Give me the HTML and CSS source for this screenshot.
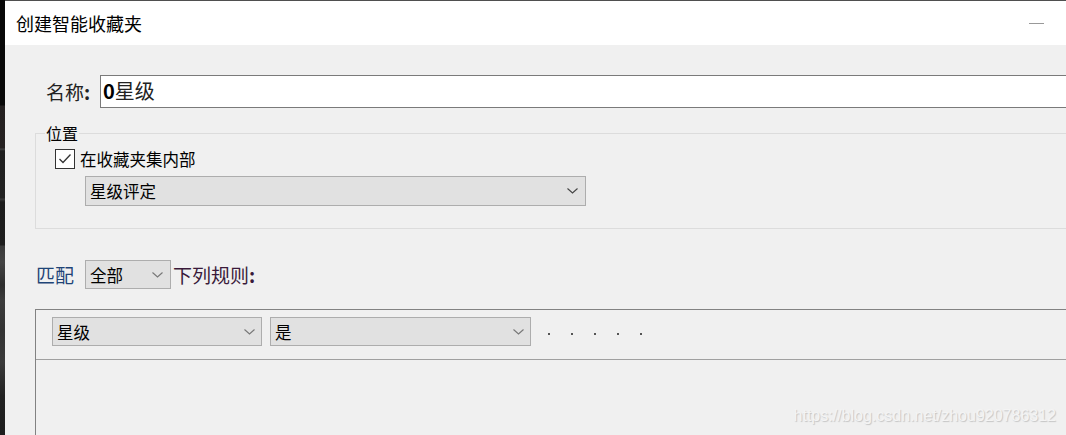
FILE: index.html
```html
<!DOCTYPE html>
<html lang="zh-CN">
<head>
<meta charset="utf-8">
<title>创建智能收藏夹</title>
<link rel="stylesheet" href="styles.css">
</head>
<body>
<div class="strip"></div>
<div class="window">
  <div class="titlebar">
    <span class="title">创建智能收藏夹</span>
    <span class="min"></span>
  </div>
  <div class="content">
    <div class="name-row">
      <span class="name-label">名称<b>:</b></span>
      <div class="name-input"><b>0</b>星级</div>
    </div>
    <div class="group">
      <div class="legend">位置</div>
      <div class="check-row">
        <span class="checkbox"><svg width="18" height="18" viewBox="0 0 18 18"><polyline points="3.5,9 7,12.5 14.5,4.5" fill="none" stroke="#333" stroke-width="1.3"/></svg></span>
        <span class="check-label">在收藏夹集内部</span>
      </div>
      <div class="select select-wide"><span>星级评定</span><svg class="chev" width="11" height="6" viewBox="0 0 11 6"><polyline points="0.5,0.5 5.5,5 10.5,0.5" fill="none" stroke="#444" stroke-width="1.1"/></svg></div>
    </div>
    <div class="match-row">
      <span class="match">匹配</span>
      <div class="select select-all"><span>全部</span><svg class="chev light" width="11" height="6" viewBox="0 0 11 6"><polyline points="0.5,0.5 5.5,5 10.5,0.5" fill="none" stroke="#777" stroke-width="1.1"/></svg></div>
      <span class="rules-label">下列规则<b>:</b></span>
    </div>
    <div class="rules">
      <div class="rule-row">
        <div class="select select-field"><span>星级</span><svg class="chev light" width="11" height="6" viewBox="0 0 11 6"><polyline points="0.5,0.5 5.5,5 10.5,0.5" fill="none" stroke="#777" stroke-width="1.1"/></svg></div>
        <div class="select select-op"><span>是</span><svg class="chev light" width="11" height="6" viewBox="0 0 11 6"><polyline points="0.5,0.5 5.5,5 10.5,0.5" fill="none" stroke="#777" stroke-width="1.1"/></svg></div>
        <div class="dots"><i></i><i></i><i></i><i></i><i></i></div>
      </div>
    </div>
  </div>
  <div class="watermark">https://blog.csdn.net/zhou920786312</div>
</div>
</body>
</html>
```
FILE: styles.css
```css
* { box-sizing: border-box; }
html, body { margin: 0; padding: 0; }
body {
  width: 1066px;
  height: 435px;
  overflow: hidden;
  display: flex;
  background: #1a1a1a;
  font-family: "Noto Sans CJK SC", "Noto Sans", sans-serif;
  color: #000;
}
.strip {
  width: 5px;
  flex: none;
  background: linear-gradient(to bottom,
    #080808 0, #080808 105px,
    #242020 106px, #262222 148px, #444 149px, #1f1f1f 151px,
    #222 198px, #3a3a3a 199px, #1c1c1c 202px, #1e1e1e 245px,
    #3a3a3a 246px, #444 262px, #2e2e2e 285px, #3c3c3c 300px,
    #333 330px, #3a3a3a 362px, #222 396px, #1d1d1d 435px);
}
.window {
  flex: 1;
  min-width: 0;
  position: relative;
  overflow: hidden;
  background: #f0f0f0;
  border-top: 1px solid #4f4f4f;
}
.titlebar {
  height: 44px;
  background: #fff;
  display: flex;
  align-items: center;
  padding: 0 22px 0 11px;
}
.title {
  font-size: 18px;
  line-height: 22px;
  color: #000;
}
.min {
  margin-left: auto;
  width: 15px;
  height: 1px;
  background: #999;
}
.content {
  padding: 30px 0 0 30px;
}
.name-row {
  display: flex;
  align-items: center;
  margin-left: 11px;
}
.name-label {
  flex: none;
  font-size: 19px;
  line-height: 33px;
  color: #222;
  width: 54px;
}
.name-label b, .rules-label b { font-weight: 700; }
.name-input {
  flex: none;
  height: 33px;
  width: 1000px;
  border: 1px solid #7a7a7a;
  background: #fff;
  font-size: 20px;
  line-height: 30px;
  padding-left: 2px;
  color: #222;
}
.name-input b { font-weight: 700; color: #000; }
.group {
  margin-top: 25px;
  width: 1100px;
  border: 1px solid #dcdcdc;
  padding: 0 0 22px 19px;
}
.legend {
  display: block;
  width: fit-content;
  margin: -11px 0 0 -10px;
  padding: 0 1px;
  background: #f0f0f0;
  font-size: 16px;
  line-height: 20px;
  height: 20px;
}
.check-row {
  display: flex;
  align-items: center;
  height: 20px;
  margin-top: 6px;
}
.checkbox {
  width: 20px;
  height: 20px;
  border: 1px solid #333;
  background: #fff;
  display: flex;
  align-items: center;
  justify-content: center;
  flex: none;
}
.check-label {
  margin-left: 5px;
  font-size: 16.5px;
  line-height: 20px;
}
.select {
  display: flex;
  align-items: center;
  justify-content: space-between;
  background: #e1e1e1;
  border: 1px solid #adadad;
  padding: 0 6px 0 4px;
  font-size: 16.5px;
  color: #000;
}
.select-wide {
  margin: 7px 0 0 30px;
  width: 501px;
  height: 30px;
  padding-right: 7px;
}
.chev { flex: none; }
.match-row {
  margin-top: 31px;
  display: flex;
  align-items: center;
}
.match {
  font-size: 19px;
  color: #1f4477;
  margin-left: 1px;
  line-height: 29px;
}
.select-all {
  margin-left: 11px;
  width: 86px;
  height: 29px;
  padding-right: 7px;
}
.rules-label {
  margin-left: 2px;
  font-size: 19px;
  color: #3a1a3a;
  line-height: 29px;
}
.rules {
  margin-top: 20px;
  height: 200px;
  width: 1100px;
  border: 1px solid #828282;
}
.rule-row {
  display: flex;
  align-items: center;
  padding: 7px 0 13px 16px;
  border-bottom: 1px solid #a0a0a0;
}
.select-field {
  width: 210px;
  height: 29px;
}
.select-op {
  margin-left: 8px;
  width: 261px;
  height: 29px;
}
.dots {
  display: flex;
  gap: 21px;
  margin-left: 17px;
  padding-top: 4px;
}
.dots i {
  display: block;
  width: 2px;
  height: 2px;
  background: #555;
}
.watermark {
  position: absolute;
  right: 10px;
  bottom: 10px;
  font-family: "Liberation Sans", Arial, sans-serif;
  font-size: 16px;
  line-height: 18px;
  color: #f4f4f4;
  text-shadow: 1px 1px 1px #c4c4c4;
}
```
